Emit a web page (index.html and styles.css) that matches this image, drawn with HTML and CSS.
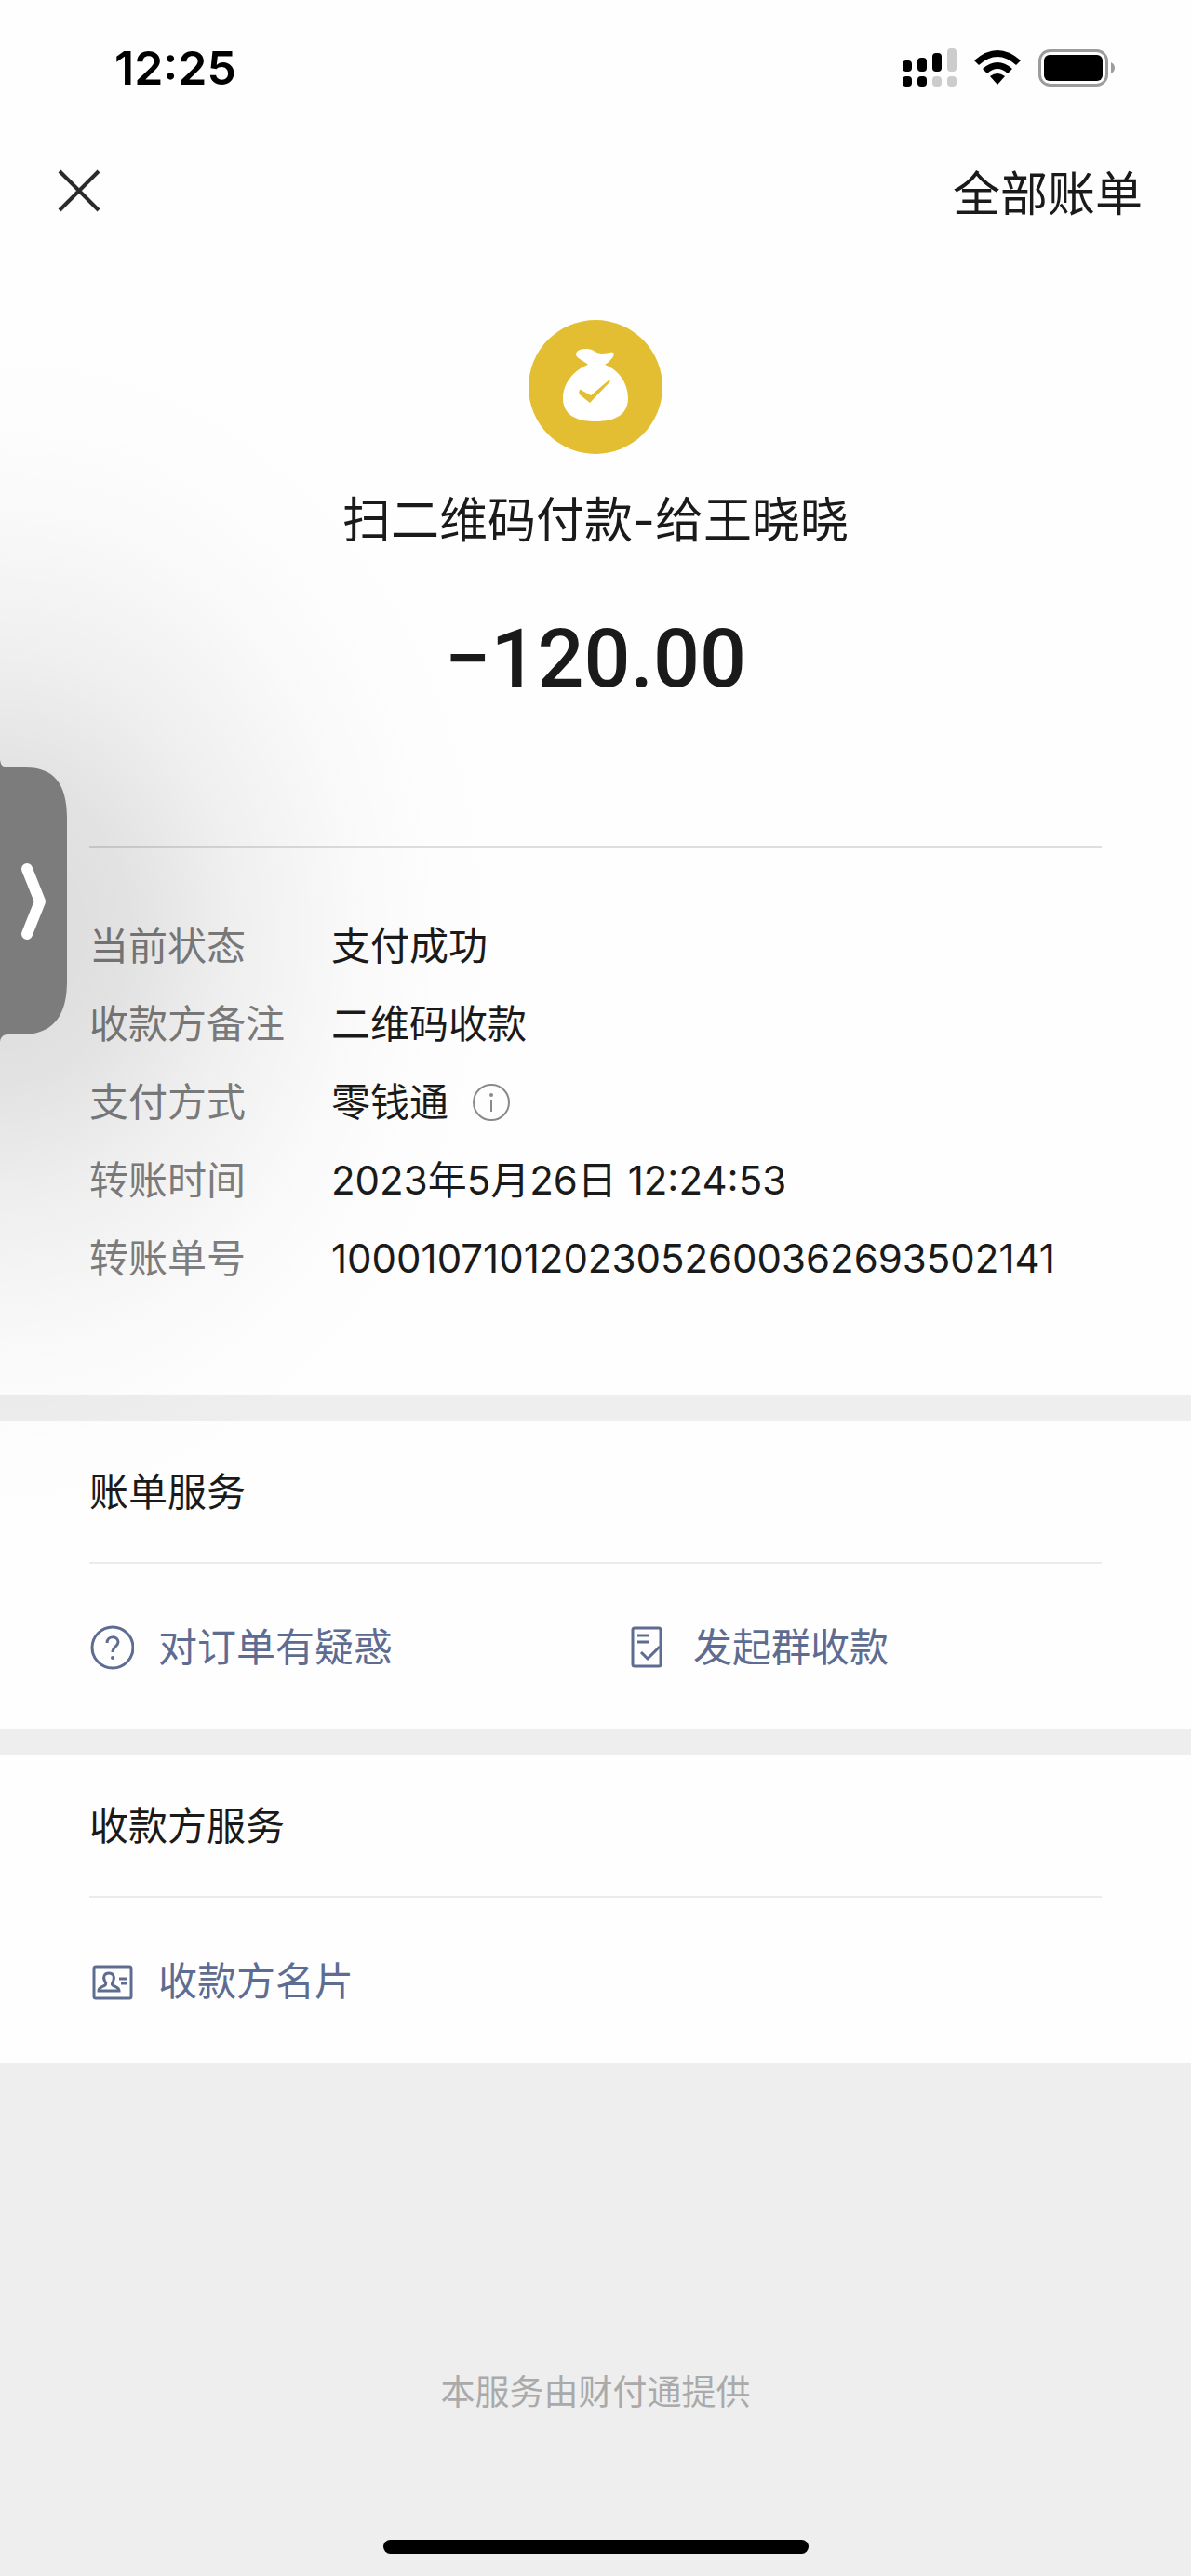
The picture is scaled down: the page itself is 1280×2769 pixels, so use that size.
FILE: index.html
```
<!DOCTYPE html>
<html lang="zh-CN">
<head>
    <meta charset="UTF-8">
    <meta name="viewport" content="width=device-width, initial-scale=1.0">
    <title>账单详情</title>
    <link rel="stylesheet" href="styles.css">
</head>
<body>
    <div class="page">
        <div class="status-bar">
            <span class="time">12:25</span>
            <div class="status-icons">
                <svg class="signal" width="58" height="42" viewBox="0 0 58 42">
                    <rect x="0" y="13" width="10" height="12" rx="4"/>
                    <rect x="16" y="10" width="10" height="15" rx="4"/>
                    <rect x="32" y="5" width="10" height="20" rx="4"/>
                    <rect class="dim" x="48" y="0" width="10" height="25" rx="4"/>
                    <rect x="0" y="30" width="10" height="11" rx="4"/>
                    <rect x="16" y="30" width="10" height="11" rx="4"/>
                    <rect class="dim" x="32" y="30" width="10" height="11" rx="4"/>
                    <rect class="dim" x="48" y="30" width="10" height="11" rx="4"/>
                </svg>
                <svg class="wifi" width="50" height="38" viewBox="0 0 50 38">
                    <path d="M0 11 Q25 -11 50 11 L45 16 Q25 -2 5 16 Z"/>
                    <path d="M9 20 Q25 6 41 20 L36 25 Q25 15 14 25 Z"/>
                    <path d="M17 28 Q25 22 33 28 L25 37 Z"/>
                </svg>
                <svg class="battery" width="83" height="40" viewBox="0 0 83 40">
                    <rect class="outline" x="1.5" y="1.5" width="72" height="37" rx="11"/>
                    <rect x="6" y="6" width="63" height="28" rx="6"/>
                    <path class="nub" d="M78 14 Q82 16 82 20 Q82 24 78 26 Z"/>
                </svg>
            </div>
        </div>

        <div class="nav-bar">
            <button class="close" aria-label="关闭">
                <svg width="50" height="50" viewBox="0 0 50 50">
                    <path d="M4 4 L46 46 M46 4 L4 46"/>
                </svg>
            </button>
            <a class="all-bills" href="#">全部账单</a>
        </div>

        <main>
            <section class="summary">
                <svg class="avatar" width="144" height="144" viewBox="0 0 144 144">
                    <circle cx="72" cy="72" r="72" fill="#e4be32"/>
                    <path fill="#fff" d="M64 48 C60 44 51 41 51 37 C51 33 56 31 62 31 C70 31 72 36 79 36 C84 36 88 34 91 35 C94 38 87 45 82 48 C98 54 107 69 107 84 C107 101 94 109 72 109 C50 109 37 101 37 84 C37 69 48 54 64 48 Z"/>
                    <path fill="#e4be32" d="M55 75 Q53 79 56 81 L66 89 L87 67 Q89 64 86 65 L67 81 L58 76 Q56 74 55 75 Z"/>
                </svg>
                <h1 class="title">扫二维码付款-给王晓晓</h1>
                <p class="amount">−120.00</p>

                <dl class="details">
                    <dt>当前状态</dt>
                    <dd>支付成功</dd>
                    <dt>收款方备注</dt>
                    <dd>二维码收款</dd>
                    <dt>支付方式</dt>
                    <dd>零钱通
                        <button class="info" aria-label="说明">
                            <svg width="42" height="42" viewBox="0 0 42 42">
                                <circle cx="21" cy="21" r="19"/>
                                <path d="M21 18 V31"/>
                                <circle class="dot" cx="21" cy="13" r="2"/>
                            </svg>
                        </button>
                    </dd>
                    <dt>转账时间</dt>
                    <dd>2023年5月26日 12:24:53</dd>
                    <dt>转账单号</dt>
                    <dd>10001071012023052600362693502141</dd>
                </dl>
            </section>

            <section class="service">
                <h2>账单服务</h2>
                <div class="links">
                    <a href="#">
                        <svg width="48" height="48" viewBox="0 0 48 48">
                            <circle cx="25" cy="24" r="22"/>
                            <path d="M19 19 C19 11 31 11 31 18 C31 23 25 23 25 29"/>
                            <circle class="dot" cx="25" cy="35" r="2"/>
                        </svg>
                        对订单有疑惑
                    </a>
                    <a href="#">
                        <svg width="48" height="48" viewBox="0 0 48 48">
                            <rect x="9" y="3" width="30" height="41" rx="2"/>
                            <path d="M14 11 H27 M14 18 H27 M18 29 L25 36 L38 23"/>
                        </svg>
                        发起群收款
                    </a>
                </div>
            </section>

            <section class="service">
                <h2>收款方服务</h2>
                <div class="links">
                    <a href="#">
                        <svg width="48" height="48" viewBox="0 0 48 48">
                            <rect x="5" y="8" width="40" height="34" rx="2"/>
                            <path d="M21 15 C16 15 15 19 16 22 C17 25 19 26 17 28 C14 30 10 30 10 34 H32 C32 30 28 30 25 28 C23 26 26 25 26 22 C27 19 26 15 21 15 Z M32 21 H40 M34 26 H40"/>
                        </svg>
                        收款方名片
                    </a>
                </div>
            </section>
        </main>

        <footer>
            <p>本服务由财付通提供</p>
            <div class="home-indicator"></div>
        </footer>

        <!-- Edge drawer, floats over the page -->
        <div class="drawer-shadow"></div>
        <button class="drawer" aria-label="展开">
            <svg width="74" height="304" viewBox="0 0 74 304">
                <path class="tab" d="M0 0 Q1 8 8 8 H28 C58 8 72 26 72 62 V238 C72 274 58 293 28 295 H8 Q1 295 0 303 Z"/>
                <path class="arrow" d="M29 117 L43 152 L29 187"/>
            </svg>
        </button>
    </div>
</body>
</html>
```
FILE: styles.css
```
* {
    box-sizing: border-box;
}

body {
    margin: 0;
    background-color: #eeeeee;
    color: #1a1a1a;
    font-family: Inter, "Noto Sans CJK SC", sans-serif;
    font-size: 42px;
}

h1, h2, p, dl, dd {
    margin: 0;
    font-weight: 400;
}

a {
    color: inherit;
    text-decoration: none;
}

button {
    padding: 0;
    border: none;
    background: none;
    cursor: pointer;
}

svg {
    display: block;
}

.page {
    position: relative;
    display: flex;
    flex-direction: column;
    min-height: 100vh;
    overflow: hidden;
}

/* Status bar */
.status-bar {
    display: flex;
    justify-content: space-between;
    align-items: center;
    height: 146px;
    padding: 0 81px 0 123px;
    background-color: #fefefe;
    color: #000;
}

.time {
    font-size: 50px;
    font-weight: 600;
}

.status-icons {
    display: flex;
    align-items: center;
    gap: 19px;
}

.status-icons .dim {
    fill: #cccccc;
}

.battery .outline {
    fill: none;
    stroke: #9c9c9c;
    stroke-width: 3;
}

.battery .nub {
    fill: #9c9c9c;
}

/* Navigation */
.nav-bar {
    display: flex;
    justify-content: space-between;
    align-items: center;
    height: 118px;
    padding: 0 52px 0 60px;
    background-color: #fefefe;
}

.close path {
    fill: none;
    stroke: #2a2a2a;
    stroke-width: 4;
}

.all-bills {
    font-size: 51px;
}

/* Payment summary */
.summary {
    padding: 80px 96px 105px;
    background-color: #fefefe;
}

.avatar {
    margin: 0 auto;
}

.title {
    margin-top: 36px;
    font-size: 52px;
    line-height: 72px;
    text-align: center;
}

.amount {
    margin-top: 62px;
    font-family: Roboto, sans-serif;
    font-size: 88px;
    font-weight: 500;
    line-height: 100px;
    text-align: center;
}

.details {
    display: grid;
    grid-template-columns: 260px 1fr;
    margin-top: 151px;
    padding-top: 64px;
    border-top: 2px solid #dedede;
    line-height: 84px;
}

.details dt {
    color: #808080;
}

.details dd {
    display: flex;
    align-items: center;
    gap: 25px;
}

.info svg {
    fill: none;
    stroke: #8a8a8a;
    stroke-width: 2;
}

.info .dot {
    fill: #8a8a8a;
    stroke: none;
}

/* Services */
.service {
    margin-top: 27px;
    padding: 0 96px;
    background-color: #fefefe;
}

.service h2 {
    padding: 47px 0 45px;
    border-bottom: 2px solid #ebebeb;
    font-size: 42px;
    line-height: 60px;
}

.links {
    display: grid;
    grid-template-columns: 1fr 1fr;
    column-gap: 62px;
    padding: 60px 0 58px;
    color: #5f6c92;
    line-height: 60px;
}

.links a {
    display: flex;
    align-items: center;
    gap: 26px;
}

.links svg {
    fill: none;
    stroke: #5f6c92;
    stroke-width: 3;
}

.links .dot {
    fill: #5f6c92;
    stroke: none;
}

/* Footer */
footer {
    display: flex;
    flex-direction: column;
    align-items: center;
    margin-top: auto;
    padding-bottom: 24px;
    color: #aaaaaa;
    font-size: 37px;
    line-height: 54px;
}

.home-indicator {
    width: 457px;
    height: 15px;
    margin-top: 131px;
    border-radius: 8px;
    background-color: #000;
}

/* Drawer */
.drawer-shadow {
    position: absolute;
    top: 340px;
    left: 0;
    width: 560px;
    height: 1320px;
    background: radial-gradient(ellipse 560px 660px at 0 50%, rgba(0, 0, 0, 0.14) 0%, rgba(0, 0, 0, 0.11) 25%, rgba(0, 0, 0, 0.06) 45%, rgba(0, 0, 0, 0.02) 68%, rgba(0, 0, 0, 0.005) 85%, rgba(0, 0, 0, 0) 100%);
    pointer-events: none;
}

.drawer {
    position: absolute;
    top: 817px;
    left: 0;
}

.drawer .tab {
    fill: #7c7c7c;
}

.drawer .arrow {
    fill: none;
    stroke: #fff;
    stroke-width: 12;
    stroke-linecap: round;
    stroke-linejoin: round;
}
```
